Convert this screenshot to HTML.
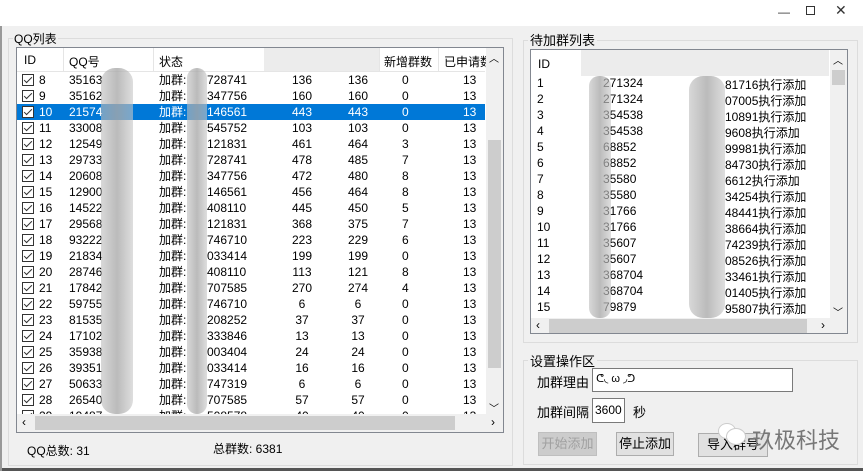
<!DOCTYPE html><html><head><meta charset="utf-8"><style>
*{margin:0;padding:0;box-sizing:border-box}
body{width:863px;height:471px;background:#f0f0f0;font:12px "Liberation Sans","Noto Sans CJK SC",sans-serif;color:#000;position:relative;overflow:hidden}
.a{position:absolute;white-space:nowrap}
.box{position:absolute;background:#fff;border:1px solid #828790}
.row{position:absolute;left:0;height:16px;width:468px;line-height:16px}
.row span{position:absolute}
.cb{position:absolute;left:5px;top:2px;width:12px;height:12px;border:1px solid #333;background:#fff}
.cb:after{content:"";position:absolute;left:3px;top:0px;width:3px;height:7px;border:solid #333;border-width:0 1.5px 1.5px 0;transform:rotate(45deg)}
.sel{background:#0078d7;color:#fff}
.blur{position:absolute;background:linear-gradient(90deg,rgba(190,190,190,.6),rgba(170,170,170,.8),rgba(200,200,200,.6))}
.btn{position:absolute;height:24px;border:1px solid #adadad;background:#e1e1e1;text-align:center;line-height:22px;font-size:13px}
</style></head><body>
<div class="a" style="left:0;top:0;width:863px;height:26px;background:#fff"></div>
<div class="a" style="left:778px;top:5px;color:#333">—</div>
<div class="a" style="left:806px;top:6px;width:9px;height:9px;border:1px solid #333"></div>
<div class="a" style="left:835px;top:2px;font-size:14px;color:#333">✕</div>
<div class="a" style="left:0;top:468px;width:863px;height:3px;background:#555"></div>
<div class="a" style="left:0;top:26px;width:2px;height:445px;background:#999"></div>

<div class="a" style="left:8px;top:38px;width:505px;height:428px;border:1px solid #dcdcdc"></div>
<div class="a" style="left:13px;top:30px;background:#f0f0f0;padding:0 1px">QQ列表</div>
<div class="box" style="left:16px;top:47px;width:488px;height:386px;overflow:hidden">
<div class="a" style="left:0;top:0;width:468px;height:24px;border-bottom:1px solid #e5e5e5">
<span class="a" style="left:7px;top:5px">ID</span><span class="a" style="left:52px;top:5px">QQ号</span><span class="a" style="left:142px;top:5px">状态</span>
<div class="a" style="left:247px;top:0;width:115px;height:23px;background:#ececec"></div>
<span class="a" style="left:367px;top:5px">新增群数</span><span class="a" style="left:427px;top:5px">已申请数</span>
<div class="a" style="left:46px;top:0;width:1px;height:24px;background:#e5e5e5"></div>
<div class="a" style="left:136px;top:0;width:1px;height:24px;background:#e5e5e5"></div>
<div class="a" style="left:362px;top:0;width:1px;height:24px;background:#e5e5e5"></div>
<div class="a" style="left:421px;top:0;width:1px;height:24px;background:#e5e5e5"></div>
</div>
<div id="rows"></div>
<div class="a" style="left:469px;top:0;width:17px;height:366px;background:#f0f0f0"><div class="a" style="left:2px;top:92px;width:13px;height:228px;background:#cdcdcd"></div><span class="a" style="left:3px;top:2px;font-size:10px">︿</span><span class="a" style="left:3px;top:352px;font-size:10px">﹀</span></div>
<div class="a" style="left:0;top:366px;width:486px;height:18px;background:#f0f0f0"><div class="a" style="left:18px;top:2px;width:420px;height:14px;background:#cdcdcd"></div><span class="a" style="left:5px;top:1px">‹</span><span class="a" style="left:474px;top:1px">›</span></div>
</div>
<div class="a" style="left:27px;top:442px">QQ总数: 31</div>
<div class="a" style="left:213px;top:440px">总群数: 6381</div>

<div class="a" style="left:523px;top:40px;width:335px;height:303px;border:1px solid #dcdcdc"></div>
<div class="a" style="left:528px;top:30px;background:#f0f0f0;padding:0 2px;font-size:13px">待加群列表</div>
<div class="box" style="left:530px;top:49px;width:318px;height:285px;overflow:hidden">
<div class="a" style="left:0;top:0;width:298px;height:26px;background:#ececec"></div>
<div class="a" style="left:0;top:0;width:50px;height:26px;background:#fff"></div>
<span class="a" style="left:7px;top:7px">ID</span>
<div id="rrows"></div>
<div class="a" style="left:299px;top:0;width:17px;height:268px;background:#f0f0f0"><div class="a" style="left:2px;top:20px;width:13px;height:15px;background:#cdcdcd"></div><span class="a" style="left:3px;top:2px;font-size:10px">︿</span><span class="a" style="left:3px;top:254px;font-size:10px">﹀</span></div>
<div class="a" style="left:0;top:268px;width:316px;height:16px;background:#f0f0f0"><div class="a" style="left:18px;top:1px;width:258px;height:14px;background:#cdcdcd"></div><span class="a" style="left:5px;top:0">‹</span><span class="a" style="left:290px;top:0">›</span></div>
</div>

<div class="a" style="left:523px;top:360px;width:335px;height:105px;border:1px solid #dcdcdc"></div>
<div class="a" style="left:528px;top:351px;background:#f0f0f0;padding:0 2px;font-size:13px">设置操作区</div>
<div class="a" style="left:537px;top:372px;font-size:13px">加群理由</div>
<div class="a" style="left:592px;top:368px;width:201px;height:24px;background:#fff;border:1px solid #7a7a7a;padding:3px 3px;font-size:11px">ᕦ◟ ω ◞ᕤ</div>
<div class="a" style="left:537px;top:402px;font-size:13px">加群间隔</div>
<div class="a" style="left:592px;top:398px;width:33px;height:25px;background:#fff;border:1px solid #7a7a7a;padding:4px 2px;font-size:12px">3600</div>
<div class="a" style="left:633px;top:402px;font-size:13px">秒</div>
<div class="btn" style="left:538px;top:432px;width:59px;color:#a0a0a0;background:#ccc;border-color:#bfbfbf">开始添加</div>
<div class="btn" style="left:616px;top:432px;width:58px">停止添加</div>
<div class="btn" style="left:698px;top:433px;width:70px">导入群号</div>
<div class="a" style="left:718px;top:423px;width:18px;height:16px;border-radius:50%;background:#fff;border:1px solid #ccc"></div>
<div class="a" style="left:726px;top:428px;width:20px;height:17px;border-radius:50%;background:#fff;border:1px solid #ccc"></div>
<div class="a" style="left:752px;top:423px;font-size:22px;color:#777">玖极科技</div>

<script>
var L=[[8,35163,728741,136,136,0],[9,35162,347756,160,160,0],[10,21574,146561,443,443,0],[11,33008,545752,103,103,0],[12,12549,121831,461,464,3],[13,29733,728741,478,485,7],[14,20608,347756,472,480,8],[15,12900,146561,456,464,8],[16,14522,408110,445,450,5],[17,29568,121831,368,375,7],[18,93222,746710,223,229,6],[19,21834,"033414",199,199,0],[20,28746,408110,113,121,8],[21,17842,707585,270,274,4],[22,59755,746710,6,6,0],[23,81535,208252,37,37,0],[24,17102,333846,13,13,0],[25,35938,"003404",24,24,0],[26,39351,"033414",16,16,0],[27,50633,747319,6,6,0],[28,26540,707585,57,57,0],[29,19487,508578,40,40,0]];
var h="";L.forEach(function(r,i){var t=24+i*16;h+='<div class="row'+(r[0]==10?' sel':'')+'" style="top:'+t+'px"><div class="cb"></div><span style="left:22px">'+r[0]+'</span><span style="left:52px">'+r[1]+'</span><span style="left:142px">加群:</span><span style="left:190px">'+r[2]+'</span><span style="left:270px;width:30px;text-align:center">'+r[3]+'</span><span style="left:326px;width:30px;text-align:center">'+r[4]+'</span><span style="left:385px">'+r[5]+'</span><span style="left:446px">13</span></div>'});
h+='<div class="blur" style="left:84px;top:20px;width:32px;height:346px;border-radius:14px"></div><div class="blur" style="left:170px;top:20px;width:20px;height:346px;border-radius:10px"></div>';
document.getElementById("rows").innerHTML=h;
var R=[["271324","81716"],["271324","07005"],["354538","10891"],["354538","9608"],["68852","99981"],["68852","84730"],["35580","6612"],["35580","34254"],["31766","48441"],["31766","38664"],["35607","74239"],["35607","08526"],["368704","33461"],["368704","01405"],["79879","95807"]];
var g="";R.forEach(function(r,i){var t=26+i*16;g+='<div class="a" style="top:'+t+'px;left:6px">'+(i+1)+'</div><div class="a" style="top:'+t+'px;left:72px">'+r[0]+'</div><div class="a" style="top:'+t+'px;left:194px">'+r[1]+'执行添加</div>'});
g+='<div class="blur" style="left:58px;top:26px;width:22px;height:242px;border-radius:10px"></div><div class="blur" style="left:158px;top:26px;width:36px;height:242px;border-radius:14px"></div>';
document.getElementById("rrows").innerHTML=g;
</script>
</body></html>
